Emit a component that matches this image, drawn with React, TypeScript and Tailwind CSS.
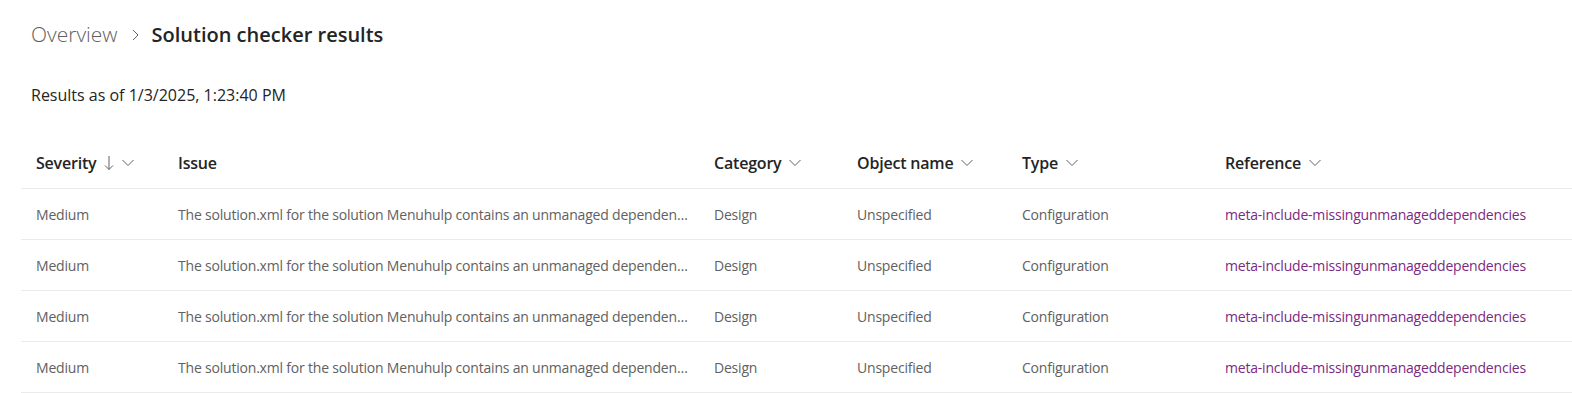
import React from 'react';

const font = { fontFamily: '"Segoe UI", "Open Sans", sans-serif' };

const Chevron = () => (
  <svg width="12" height="8" viewBox="0 0 12 8" className="ml-[8px] text-[#616161]">
    <path d="M0.5 1 L6 6.5 L11.5 1" fill="none" stroke="currentColor" strokeWidth="1" />
  </svg>
);

const SortDown = () => (
  <svg width="10" height="16" viewBox="0 0 10 16" className="ml-[8px] text-[#616161]">
    <path d="M5 1 V14.5 M1 10.5 L5 14.5 L9 10.5" fill="none" stroke="currentColor" strokeWidth="1" />
  </svg>
);

const columns = [
  { label: 'Severity', w: 'w-[142px]', sort: true, filter: true },
  { label: 'Issue', w: 'w-[536px]', sort: false, filter: false },
  { label: 'Category', w: 'w-[143px]', sort: false, filter: true },
  { label: 'Object name', w: 'w-[165px]', sort: false, filter: true },
  { label: 'Type', w: 'w-[203px]', sort: false, filter: true },
  { label: 'Reference', w: 'flex-1', sort: false, filter: true },
];

const rows = Array.from({ length: 4 }, () => ({
  severity: 'Medium',
  issue: 'The solution.xml for the solution Menuhulp contains an unmanaged dependency on a component that is not included',
  category: 'Design',
  object: 'Unspecified',
  type: 'Configuration',
  reference: 'meta-include-missingunmanageddependencies',
}));

export default function App() {
  return (
    <div className="w-[1572px] h-[393px] overflow-hidden bg-white text-[#242424]" style={font}>
      <div className="pl-[31px] pt-[19px]">
        <div className="flex items-center h-[32px]">
          <span className="text-[21px] font-light text-[#616161]">Overview</span>
          <svg width="10" height="14" viewBox="0 0 10 14" className="ml-[12px] mr-[12px] text-[#616161]">
            <path d="M3 2 L8 7 L3 12" fill="none" stroke="currentColor" strokeWidth="1" />
          </svg>
          <span className="text-[20px] font-semibold text-[#242424]">Solution checker results</span>
        </div>
      </div>
      <div className="pl-[31px] mt-[33px] text-[16px] h-[22px] leading-[22px]">Results as of 1/3/2025, 1:23:40 PM</div>
      <div className="ml-[21px] mt-[31px]">
        <div className="flex h-[52px] items-center border-b border-[#ebebeb]">
          {columns.map((c) => (
            <div key={c.label} className={`${c.w} pl-[15px] flex items-center text-[16px] font-semibold tracking-[-0.2px] text-[#242424]`}>
              <span>{c.label}</span>
              {c.sort && <SortDown />}
              {c.filter && <Chevron />}
            </div>
          ))}
        </div>
        {rows.map((r, i) => (
          <div key={i} className="flex h-[51px] items-center border-b border-[#ebebeb] text-[14px] tracking-[-0.2px] text-[#616161]">
            <div className="w-[142px] pl-[15px]">{r.severity}</div>
            <div className="w-[536px] pl-[15px] pr-[10px] truncate">{r.issue}</div>
            <div className="w-[143px] pl-[15px]">{r.category}</div>
            <div className="w-[165px] pl-[15px]">{r.object}</div>
            <div className="w-[203px] pl-[15px]">{r.type}</div>
            <div className="flex-1 pl-[15px] text-[#7b2a82]">{r.reference}</div>
          </div>
        ))}
      </div>
    </div>
  );
}
